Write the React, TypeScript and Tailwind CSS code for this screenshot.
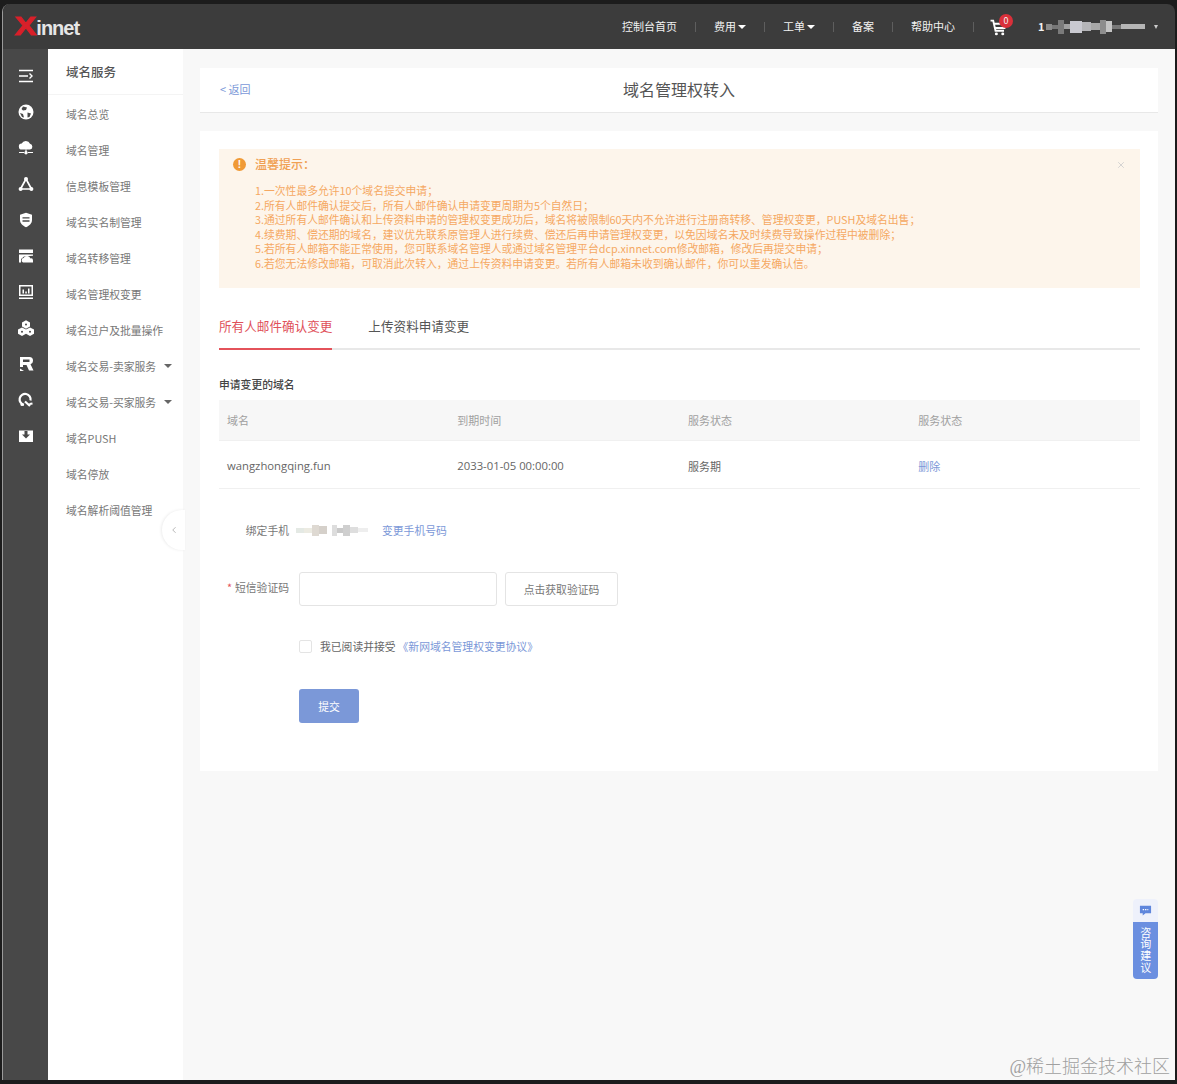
import { ChevronLeft, X } from "lucide-react";

const font = "font-['Noto_Sans_CJK_SC','Noto_Sans',sans-serif]";

const railIcons = [
  // collapse menu
  <svg key="menu" viewBox="0 0 16 16" className="w-4 h-4" fill="none" stroke="white" strokeWidth="1.4">
    <path d="M1 2.500h14M1 8h9M1 13.500h14M11.500 5.500 14 8l-2.500 2.500" />
  </svg>,
  // globe
  <svg key="globe" viewBox="0 0 16 16" className="w-4 h-4">
    <circle cx="8" cy="8" r="7.500" fill="white" />
    <path d="M5 2.500 9 3.500 8 6 5 6.500 3.500 5ZM9.500 8.500l3.500 1-1.500 3.500-2 .5ZM2 9l3 1 1 3.500-2-.5Z" fill="#484848" />
  </svg>,
  // cloud + network
  <svg key="cloud" viewBox="0 0 16 16" className="w-4 h-4" fill="white">
    <path d="M4 9.500a3 3 0 0 1-.3-6A4.500 4.500 0 0 1 12 3.800a2.900 2.900 0 0 1 0 5.700Z" />
    <path d="M7.400 9.500h1.200V12H7.400ZM1 12h5v1H1ZM10 12h5v1h-5Z" />
    <circle cx="8" cy="12.800" r="1.700" />
  </svg>,
  // triangle nodes
  <svg key="nodes" viewBox="0 0 16 16" className="w-4 h-4" fill="none" stroke="white">
    <path d="M8 3 2.500 13h11Z" strokeWidth="1.700" />
    <circle cx="8" cy="3" r="2" fill="white" stroke="none" />
    <circle cx="2.600" cy="13" r="2" fill="white" stroke="none" />
    <circle cx="13.400" cy="13" r="2" fill="white" stroke="none" />
  </svg>,
  // shield
  <svg key="shield" viewBox="0 0 16 16" className="w-4 h-4">
    <path d="M8 .8 14 2.800V8c0 3.500-3 6-6 7.200C5 14 2 11.500 2 8V2.800Z" fill="white" />
    <path d="M4.500 5.800h7M4.500 9h7" stroke="#484848" strokeWidth="1.300" />
  </svg>,
  // transfer box
  <svg key="box" viewBox="0 0 16 16" className="w-4 h-4" fill="white">
    <path d="M1 1.500h14V5H1ZM1 6.500h14v1.200L6 8.500 3 11v3.500H1Z" />
    <path d="M5 14.500a2.300 2.300 0 0 1 .6-4.400 3.700 3.700 0 0 1 6.900.4 2 2 0 0 1 2.500 1.900v2.100Z" />
  </svg>,
  // monitor chart
  <svg key="monitor" viewBox="0 0 16 16" className="w-4 h-4">
    <path d="M1 1h14v11H1ZM1 13.500h14V15H1Z" fill="white" />
    <path d="M2.500 2.500h11v8h-11Z" fill="#484848" />
    <path d="M4.500 5.500H6v4H4.500ZM7.300 7.500h1.500v2H7.300ZM10 4.500h1.500v5H10Z" fill="white" />
  </svg>,
  // cubes
  <svg key="cubes" viewBox="0 0 16 16" className="w-4 h-4" fill="white">
    <path d="M8 .2 12 2.400V6.600L8 8.800 4 6.600V2.400Z" />
    <path d="M4 7.400 8 9.600v4.200L4 16 0 13.800V9.600Z" />
    <path d="M12 7.400l4 2.200v4.200L12 16l-4-2.200V9.600Z" />
    <circle cx="8" cy="4.500" r="1" fill="#484848" />
    <circle cx="4" cy="11.700" r="1" fill="#484848" />
    <circle cx="12" cy="11.700" r="1" fill="#484848" />
  </svg>,
  // seller
  <svg key="seller" viewBox="0 0 16 16" className="w-4 h-4" fill="white">
    <path d="M2 1h9.500A3.500 3.500 0 0 1 15 4.500V5a3.500 3.500 0 0 1-2.500 3.300L15.500 14.500H11L8.500 9H5v2H2Z" />
    <path d="M2 12.500 6 15H2Z" />
    <path d="M5 3.500h6.500V6H5Z" fill="#484848" />
  </svg>,
  // buyer
  <svg key="buyer" viewBox="0 0 16 16" className="w-4 h-4" fill="none" stroke="white" strokeWidth="2.200">
    <path d="M12.500 8.500A5.500 5.500 0 1 0 6 12.800" />
    <path d="M7 9.500 12 14M14.500 11.500l-3 .5" />
    <circle cx="4" cy="12.500" r="1.600" fill="white" stroke="none" />
  </svg>,
  // push inbox
  <svg key="push" viewBox="0 0 16 16" className="w-4 h-4">
    <path d="M1 2.500h14V14H1Z" fill="white" />
    <path d="M6.500 3h3v3.500H12L8 10.500 4 6.500h2.500Z" fill="#484848" />
  </svg>,
];

const sideItems = [
  { label: "域名总览" },
  { label: "域名管理" },
  { label: "信息模板管理" },
  { label: "域名实名制管理" },
  { label: "域名转移管理" },
  { label: "域名管理权变更" },
  { label: "域名过户及批量操作" },
  { label: "域名交易-卖家服务", caret: true },
  { label: "域名交易-买家服务", caret: true },
  { label: "域名PUSH" },
  { label: "域名停放" },
  { label: "域名解析阈值管理" },
];

const tips = [
  "1.一次性最多允许10个域名提交申请；",
  "2.所有人邮件确认提交后，所有人邮件确认申请变更周期为5个自然日；",
  "3.通过所有人邮件确认和上传资料申请的管理权变更成功后，域名将被限制60天内不允许进行注册商转移、管理权变更，PUSH及域名出售；",
  "4.续费期、偿还期的域名，建议优先联系原管理人进行续费、偿还后再申请管理权变更，以免因域名未及时续费导致操作过程中被删除；",
  "5.若所有人邮箱不能正常使用，您可联系域名管理人或通过域名管理平台dcp.xinnet.com修改邮箱，修改后再提交申请；",
  "6.若您无法修改邮箱，可取消此次转入，通过上传资料申请变更。若所有人邮箱未收到确认邮件，你可以重发确认信。",
];

// pixelated blocks standing in for the blurred-out account name
const userMosaic = [
  "w-[6px] h-[6px] bg-[#8a8a8a]",
  "w-[6px] h-[4px] bg-[#777777]",
  "w-[6px] h-[14px] bg-[#7a7a7a]",
  "w-[6px] h-[5px] bg-[#a0a0a0]",
  "w-[12px] h-[12px] bg-[#c9c9d0]",
  "w-[9px] h-[9px] bg-[#b5b5b8]",
  "w-[9px] h-[7px] bg-[#a8a8a8]",
  "w-[6px] h-[14px] bg-[#8d8d8d]",
  "w-[6px] h-[11px] bg-[#c4c4c4]",
  "w-[9px] h-[4px] bg-[#777777]",
  "w-[24px] h-[5px] bg-[#b5b5b5]",
];

const phoneMosaic = [
  "w-[8px] h-[5px] bg-[#e4e9e4]",
  "w-[8px] h-[5px] bg-[#ecebe2]",
  "w-[7px] h-[11px] bg-[#ded9d2]",
  "w-[8px] h-[8px] bg-[#d5d0ca]",
  "w-[5px] h-0",
  "w-[5px] h-[11px] bg-[#dddddd]",
  "w-[6px] h-[5px] bg-[#c9c9c9]",
  "w-[7px] h-[11px] bg-[#cfcfcf]",
  "w-[8px] h-[6px] bg-[#dedede]",
  "w-[10px] h-[4px] bg-[#eeeeee]",
];

function Caret() {
  return <span className="inline-block w-0 h-0 border-x-[4px] border-x-transparent border-t-[4px] border-t-white ml-[2px] align-[2px]" />;
}

function Sep() {
  return <span className="w-px h-[10px] bg-[#5e5e5e]" />;
}

function Header() {
  return (
    <header className="h-[45px] shrink-0 bg-[#3c3c3c] flex items-center justify-between pl-[12px] pr-[15px] text-white">
      <div className="flex items-baseline font-['Liberation_Sans',sans-serif] font-bold text-[20px] tracking-[-1px] text-[#e6e6e6]">
        <span className="text-[#d8202a] text-[26px] origin-left scale-x-[1.25] mr-[5px] [-webkit-text-stroke:1px_#d8202a]">X</span>
        <span>innet</span>
      </div>
      <nav className="flex items-center gap-[18px] text-[11px] text-[#f2f2f2]">
        <span>控制台首页</span>
        <Sep />
        <span>费用<Caret /></span>
        <Sep />
        <span>工单<Caret /></span>
        <Sep />
        <span>备案</span>
        <Sep />
        <span>帮助中心</span>
        <Sep />
        <div className="relative w-[16px] h-[16px] -ml-[2px] mr-[14px]">
          <svg viewBox="0 0 16 16" className="w-[17px] h-[17px]" fill="none" stroke="white" strokeWidth="1.800">
            <path d="M.5 1.500h2.500l2.200 9.500h8M3.600 4.500H15l-1.300 4H4.800" />
            <circle cx="6" cy="14" r="1.400" fill="white" stroke="none" />
            <circle cx="12" cy="14" r="1.400" fill="white" stroke="none" />
          </svg>
          <span className="absolute -top-[5px] left-[9px] w-[14px] h-[14px] rounded-full bg-[#d9303a] text-[9px] leading-[14px] text-center">0</span>
        </div>
        <div className="flex items-center w-[122px]">
          <span className="text-[11px] font-bold mr-px">1</span>
          <div className="flex items-center blur-[0.6px]">
            {userMosaic.map((c, i) => (
              <span key={i} className={c} />
            ))}
          </div>
          <span className="ml-auto mr-[2px] w-0 h-0 border-x-[2.5px] border-x-transparent border-t-[4px] border-t-[#cccccc]" />
        </div>
      </nav>
    </header>
  );
}

function Rail() {
  return (
    <aside className="w-[45px] shrink-0 bg-[#484848] flex flex-col items-center pt-[9px]">
      {railIcons.map((icon, i) => (
        <div key={i} className="h-[36px] w-full flex items-center justify-center">
          {icon}
        </div>
      ))}
    </aside>
  );
}

function Sidebar() {
  return (
    <aside className="relative w-[135px] shrink-0 bg-white text-[10.8px] text-[#777777]">
      <div className="h-[46px] flex items-center pl-[18px] pt-[2px] text-[12.5px] font-medium text-[#555555] border-b border-[#f4f4f4]">
        域名服务
      </div>
      <ul>
        {sideItems.map((item) => (
          <li key={item.label} className="h-[36px] flex items-center pl-[18px] pt-[2px]">
            <span>{item.label}</span>
            {item.caret && (
              <span className="ml-[8px] w-0 h-0 border-x-[4px] border-x-transparent border-t-[4px] border-t-[#666666]" />
            )}
          </li>
        ))}
      </ul>
      <div className="absolute top-[461px] -right-[2px] w-[23px] h-[40px] rounded-l-full bg-white shadow-[-1px_0_3px_rgba(0,0,0,0.08)] flex items-center justify-center">
        <ChevronLeft className="w-[10px] h-[10px] text-[#aaaaaa]" />
      </div>
    </aside>
  );
}

function TipBox() {
  return (
    <div className="relative h-[139px] bg-[#fdf5eb] pt-[7px] pl-[14px] text-[#f5a862]">
      <div className="flex items-center h-[16px]">
        <span className="w-[13px] h-[13px] rounded-full bg-[#f09a36] text-white text-[10px] font-bold leading-[13px] text-center font-['Liberation_Sans',sans-serif]">!</span>
        <span className="ml-[9px] text-[12px] font-medium text-[#f0a054]">温馨提示：</span>
      </div>
      <div className="mt-[11px] ml-[22px] text-[10.8px] leading-[14.6px] whitespace-nowrap">
        {tips.map((t) => (
          <p key={t}>{t}</p>
        ))}
      </div>
      <X className="absolute top-[11px] right-[14px] w-[10px] h-[10px] text-[#cccccc]" />
    </div>
  );
}

function Tabs() {
  return (
    <div className="mt-[21px] h-[41px] flex gap-[36px] border-b-2 border-[#e8e8e8] text-[12.6px]">
      <div className="h-[41px] pt-[8px] text-[#e0505a] border-b-2 border-[#e4525a]">所有人邮件确认变更</div>
      <div className="pt-[8px] text-[#555555]">上传资料申请变更</div>
    </div>
  );
}

function DomainTable() {
  return (
    <div className="text-[11px]">
      <div className="grid grid-cols-4 h-[41px] items-center bg-[#f7f7f7] border-b border-[#f0f0f0] text-[#a0a0a0]">
        <span className="pl-[8px]">域名</span>
        <span className="pl-[8px]">到期时间</span>
        <span className="pl-[8.5px]">服务状态</span>
        <span className="pl-[8.5px]">服务状态</span>
      </div>
      <div className="grid grid-cols-4 h-[48px] items-center border-b border-[#f0f0f0] text-[#666666]">
        <span className="pl-[8px] pt-[3px] text-[11.3px] font-['Open_Sans',sans-serif]">wangzhongqing.fun</span>
        <span className="pl-[8px] pt-[3px] text-[11.3px] font-['Open_Sans',sans-serif]">2033-01-05 00:00:00</span>
        <span className="pl-[8.5px] pt-[3px]">服务期</span>
        <span className="pl-[8.5px] pt-[3px] text-[#7b98d8]">删除</span>
      </div>
    </div>
  );
}

function ChangeForm() {
  return (
    <div className="text-[10.8px] text-[#777777]">
      <div className="mt-[31px] h-[20px] flex items-center">
        <span className="w-[70px] text-right">绑定手机</span>
        <div className="ml-[7px] w-[79px] flex items-center blur-[0.5px]">
          {phoneMosaic.map((c, i) => (
            <span key={i} className={c} />
          ))}
        </div>
        <span className="ml-[7px] text-[#7b98d8]">变更手机号码</span>
      </div>
      <div className="mt-[32px] flex items-center h-[34px]">
        <span className="w-[70px] text-right pb-[3px]"><span className="text-[#e4525a] mr-[3px]">*</span>短信验证码</span>
        <input className="ml-[10px] w-[198px] h-[34px] border border-[#e4e4e4] rounded-[3px] bg-white" />
        <button className="ml-[8px] w-[113px] h-[34px] border border-[#e4e4e4] rounded-[3px] bg-white text-[#777777]">点击获取验证码</button>
      </div>
      <div className="mt-[33px] ml-[80px] flex items-center h-[14px]">
        <span className="w-[13px] h-[13px] border border-[#e4e4e4] rounded-[2px]" />
        <span className="ml-[8px] text-[#666666]">我已阅读并接受</span>
        <span className="ml-[2px] text-[#7b98d8]">《新网域名管理权变更协议》</span>
      </div>
      <button className="block mt-[36px] ml-[80px] w-[60px] h-[34px] rounded-[3px] bg-[#7b98d8] text-white">提交</button>
    </div>
  );
}

export default function App() {
  return (
    <div className={"relative w-[1177px] h-[1084px] overflow-hidden bg-[#1c1c1c] pt-[4px] pb-[4px] pl-[2px] pr-[2px] " + font}>
      <div className="h-full flex flex-col overflow-hidden rounded-t-[8px] border-l border-[#9a9a9a]">
        <Header />
        <div className="flex-1 flex min-h-0 bg-[#f8f8f8]">
          <Rail />
          <Sidebar />
          <main className="flex-1 pl-[17px] pr-[17px] pt-[19px]">
            <div className="relative h-[45px] pb-[2px] bg-white border-b border-[#e8e8e8] flex items-center justify-center">
              <span className="absolute left-[20px] text-[11px] text-[#7b98d8]">&lt; 返回</span>
              <span className="text-[16px] text-[#555555]">域名管理权转入</span>
            </div>
            <div className="mt-[18px] h-[640px] bg-white pt-[18px] pl-[19px] pr-[18px]">
              <TipBox />
              <Tabs />
              <h3 className="mt-[26px] mb-[8px] h-[16px] leading-[16px] text-[10.8px] font-medium text-[#444444]">申请变更的域名</h3>
              <DomainTable />
              <ChangeForm />
            </div>
          </main>
        </div>
      </div>

      {/* floating consult tab */}
      <div className="absolute left-[1133px] top-[899px] w-[25px] h-[80px] rounded-[4px] overflow-hidden">
        <div className="h-[23px] bg-[#eef1fb] flex items-center justify-center">
          <svg viewBox="0 0 14 14" className="w-[13px] h-[13px]">
            <path d="M1 2h12v8H7l-3 2.500V10H1Z" fill="#5f86dc" />
            <path d="M4 6h6" stroke="white" strokeWidth="1.200" strokeDasharray="1.500 1" />
          </svg>
        </div>
        <div className="w-[25px] h-[57px] bg-[#6b8fe0] text-white text-[11px] tracking-[0.8px] flex items-center justify-center [writing-mode:vertical-rl]">
          咨询建议
        </div>
      </div>

      {/* watermark */}
      <div className="absolute right-[7px] bottom-[4px] text-[18px] leading-[26px] font-light text-[#a0a0a0] font-['Liberation_Serif','Noto_Sans_CJK_SC',serif] whitespace-nowrap">
        @稀土掘金技术社区
      </div>
    </div>
  );
}
